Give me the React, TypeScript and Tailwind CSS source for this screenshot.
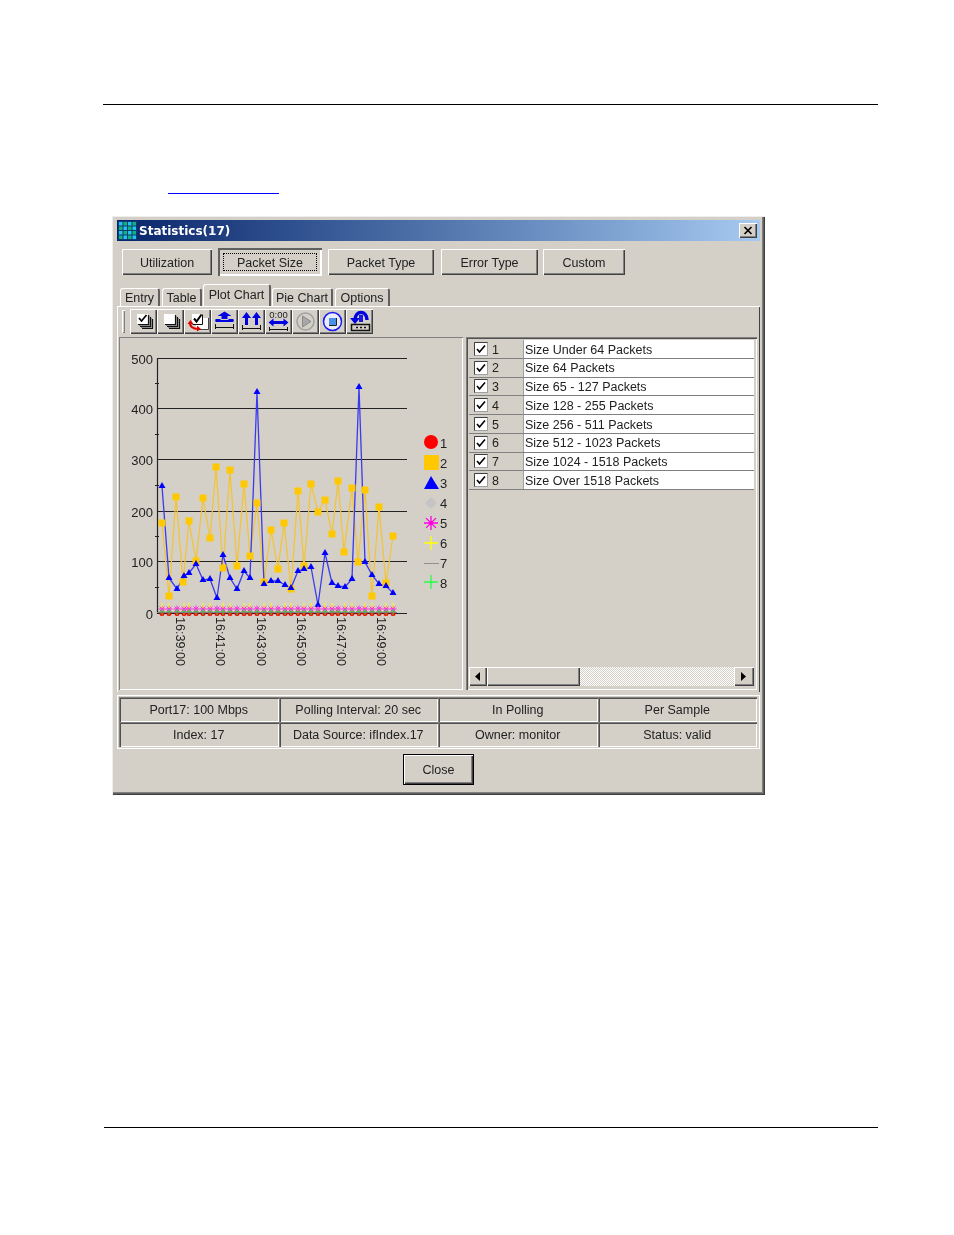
import React from "react";

const raised = "shadow-[inset_1px_1px_0_#ffffff,inset_-1px_-1px_0_#404040,inset_-2px_-2px_0_#808080]";
const sunken = "shadow-[inset_1px_1px_0_#808080,inset_2px_2px_0_#505050,inset_-1px_-1px_0_#ffffff]";
const etched = "shadow-[inset_1px_1px_0_#808080,inset_-1px_-1px_0_#ffffff]";

const blue: [number, number][] = [
  [162, 486], [169, 578], [177, 589], [184, 576], [189, 573], [196, 564], [203, 580], [210, 579], [217, 598],
  [223, 555], [230, 578], [237, 589], [244, 571], [250, 578], [257, 392], [264, 584], [271, 581], [278, 581],
  [285, 585], [291, 588], [298, 571], [304, 569], [311, 567], [318, 605], [325, 553], [332, 583], [338, 586],
  [345, 587], [352, 579], [359, 387], [365, 562], [372, 575], [379, 584], [386, 586], [393, 593],
];

const orange: [number, number][] = [
  [162, 523], [169, 596], [176, 497], [183, 582], [189, 521], [196, 561], [203, 498], [210, 538], [216, 467],
  [223, 568], [230, 470], [237, 566], [244, 484], [250, 556], [257, 503], [264, 582], [271, 530], [278, 569],
  [284, 523], [291, 589], [298, 491], [304, 566], [311, 484], [318, 512], [325, 500], [332, 534], [338, 481],
  [344, 552], [352, 488], [358, 562], [365, 490], [372, 596], [379, 507], [386, 583], [393, 536],
];

const ticks = [
  { y: 358, label: "500" },
  { y: 408, label: "400" },
  { y: 459, label: "300" },
  { y: 511, label: "200" },
  { y: 561, label: "100" },
  { y: 613, label: "0" },
];

const times = [
  { x: 176, label: "16:39:00" },
  { x: 216, label: "16:41:00" },
  { x: 257, label: "16:43:00" },
  { x: 297, label: "16:45:00" },
  { x: 337, label: "16:47:00" },
  { x: 377, label: "16:49:00" },
];

const series = [
  "Size Under 64 Packets",
  "Size 64 Packets",
  "Size 65 - 127 Packets",
  "Size 128 - 255 Packets",
  "Size 256 - 511 Packets",
  "Size 512 - 1023 Packets",
  "Size 1024 - 1518 Packets",
  "Size Over 1518 Packets",
];

const topButtons = [
  { label: "Utilization", cls: "w-[90px] h-[26px] ml-[5px]" },
  { label: "Packet Size", cls: "w-[104px] h-[28px] ml-[6px]", active: true },
  { label: "Packet Type", cls: "w-[106px] h-[26px] ml-[6px]" },
  { label: "Error Type", cls: "w-[97px] h-[26px] ml-[7px]" },
  { label: "Custom", cls: "w-[82px] h-[26px] ml-[5px]" },
];

const tabs = [
  { label: "Entry", cls: "w-[40px] h-[18px] ml-[3px]" },
  { label: "Table", cls: "w-[40px] h-[18px] ml-[2px]" },
  { label: "Plot Chart", cls: "w-[68px] h-[22px] ml-[1px]", active: true },
  { label: "Pie Chart", cls: "w-[61px] h-[18px] ml-[1px]" },
  { label: "Options", cls: "w-[55px] h-[18px] ml-[2px]" },
];

const statusCells = [
  "Port17: 100 Mbps",
  "Polling Interval: 20 sec",
  "In Polling",
  "Per Sample",
  "Index: 17",
  "Data Source: ifIndex.17",
  "Owner: monitor",
  "Status: valid",
];

function Star({ x, y, r, color, w = 1 }: { x: number; y: number; r: number; color: string; w?: number }) {
  const d = r * 0.7;
  return (
    <path
      d={`M${x - r} ${y}H${x + r}M${x} ${y - r}V${y + r}M${x - d} ${y - d}L${x + d} ${y + d}M${x - d} ${y + d}L${x + d} ${y - d}`}
      stroke={color}
      strokeWidth={w}
    />
  );
}

function Plus({ x, y, r, color, w = 1 }: { x: number; y: number; r: number; color: string; w?: number }) {
  return <path d={`M${x - r} ${y}H${x + r}M${x} ${y - r}V${y + r}`} stroke={color} strokeWidth={w} />;
}

function Chart() {
  const line = (pts: [number, number][]) => pts.map((p) => p.join(",")).join(" ");
  return (
    <svg width="344" height="353" viewBox="119 337 344 353" className="block">
      <g fontFamily="Liberation Sans, Arial, sans-serif" fontSize="13" fill="#222">
        {ticks.map((t) => (
          <g key={t.label}>
            <line x1="157" x2="407" y1={t.y + 0.5} y2={t.y + 0.5} stroke="#222" strokeWidth="1.2" />
            <text x="153" y={t.y + 6} textAnchor="end">{t.label}</text>
          </g>
        ))}
        {[383, 434, 485, 536, 587].map((y) => (
          <line key={y} x1="155" x2="159" y1={y + 0.5} y2={y + 0.5} stroke="#222" />
        ))}
        <line x1="157.5" x2="157.5" y1="358" y2="614" stroke="#222" strokeWidth="1.2" />
        {times.map((t) => (
          <text key={t.label} x={t.x} y="617" fontSize="12.6" transform={`rotate(90 ${t.x} 617)`}>{t.label}</text>
        ))}
      </g>

      <polyline points={line(orange)} fill="none" stroke="#f2c43c" strokeWidth="1.3" />
      <polyline points={line(blue)} fill="none" stroke="#3a3aee" strokeWidth="1.3" />
      {orange.map(([x, y], i) => (
        <rect key={i} x={x - 3.5} y={y - 3.5} width="7" height="7" fill="#ffc800" />
      ))}
      {blue.map(([x, y], i) => (
        <polygon key={i} points={`${x},${y - 4} ${x + 3.5},${y + 2} ${x - 3.5},${y + 2}`} fill="#0000ff" />
      ))}

      {blue.map(([x], i) => (
        <g key={i}>
          <circle cx={x} cy="613.500" r="2.500" fill="#ff0000" />
          <circle cx={x} cy="609" r="2" fill="#f080d8" />
          <Star x={x} y={609} r={3.5} color="#ff33e0" />
          <Plus x={x} y={612} r={3} color="#11ee33" />
          {i % 3 !== 2 && <path d={`M${x} 603V608`} stroke="#ffff00" />}
        </g>
      ))}
      <line x1="157" x2="397" y1="612.5" y2="612.5" stroke="#808080" />

      <circle cx="431" cy="442" r="7" fill="#ff0000" />
      <rect x="424" y="455" width="15" height="15" fill="#ffc800" />
      <polygon points="431,476 439,489 424,489" fill="#0000ff" />
      <polygon points="431,497 437,503 431,509 425,503" fill="#c4c4c4" />
      <Star x={431} y={523} r={7} color="#ff00e0" w={1.3} />
      <circle cx="431" cy="523" r="2" fill="#ff00e0" />
      <Plus x={431} y={543} r={7} color="#ffff00" w={1.3} />
      <line x1="424" x2="439" y1="563.5" y2="563.5" stroke="#909090" />
      <Plus x={431} y={582} r={7} color="#22ff44" w={1.3} />
      <g fontFamily="Liberation Sans, Arial, sans-serif" fontSize="13" fill="#222">
        {[448, 468, 488, 508, 528, 548, 568, 588].map((y, i) => (
          <text key={y} x="440" y={y}>{i + 1}</text>
        ))}
      </g>
    </svg>
  );
}

const icons: React.ReactNode[] = [
  <g key="a">
    <path d="M7 5h11v10H7z" fill="#fff" />
    <path d="M18.500 6v9.500H8M20.500 8v9.500H10M22.500 10v9.500H12" fill="none" stroke="#111" strokeWidth="1.200" />
    <path d="M19.500 7v9.500H9M21.500 9v9.500H11" fill="none" stroke="#888" />
    <path d="M9 9l2.500 3 5-6" fill="none" stroke="#000" strokeWidth="1.700" />
  </g>,
  <g key="b">
    <path d="M7 5h11v10H7z" fill="#fff" />
    <path d="M18.500 6v9.500H8M20.500 8v9.500H10M22.500 10v9.500H12" fill="none" stroke="#111" strokeWidth="1.200" />
    <path d="M19.500 7v9.500H9M21.500 9v9.500H11" fill="none" stroke="#888" />
  </g>,
  <g key="c">
    <path d="M12 9h12v11H12z" fill="#fff" />
    <path d="M24.500 9v11.500H14" fill="none" stroke="#444" />
    <path d="M8 5h10v10H8z" fill="#fff" />
    <path d="M18.500 5.500v10H8.500" fill="none" stroke="#111" />
    <path d="M10 9.500l2.500 3 5-7" fill="none" stroke="#000" strokeWidth="2" />
    <path d="M6.500 13c-1.500 4 2 7 8 7" fill="none" stroke="#e00000" strokeWidth="2" />
    <path d="M3.500 15l3-4 3 4zM13 16.500l4 3.500-4 2.500z" fill="#e00000" />
  </g>,
  <g key="d">
    <path d="M13.500 2.500l7 4.500h-4v3h-6v-3h-4z" fill="#0000e0" />
    <path d="M4.500 12h18" stroke="#0000e0" strokeWidth="2" />
    <path d="M4.500 10h5v2h-5zM17.500 10h5v2h-5z" fill="#0000e0" />
    <path d="M4.500 15v5M22.500 15v5M4.500 18.500h18" stroke="#111" />
  </g>,
  <g key="e">
    <path d="M8.500 3l4.500 6h-3v7h-3V9H4zM18.500 3l4.500 6h-3v7h-3V9h-3z" fill="#0000e0" />
    <path d="M4.500 16v5M22.500 16v5M4.500 19.500h18" stroke="#111" />
  </g>,
  <g key="f">
    <text x="13.500" y="8.500" fontFamily="Liberation Sans, Arial, sans-serif" fontSize="9.500" textAnchor="middle" fill="#222">0:00</text>
    <path d="M3.500 13.500l5-4v2.500h10V9.500l5 4-5 4V15h-10v2.500z" fill="#0000e0" />
    <path d="M4.500 18v4M22.500 18v4M4.500 20.500h18" stroke="#111" />
  </g>,
  <g key="g">
    <circle cx="13.500" cy="12.500" r="8.500" fill="none" stroke="#a0a0a0" strokeWidth="1.500" />
    <path d="M10.500 7l8.500 5.500-8.500 5.500z" fill="#a8a8a8" stroke="#8a8a8a" />
  </g>,
  <g key="h">
    <circle cx="13.500" cy="12.500" r="9" fill="#ececff" stroke="#1a1aee" strokeWidth="1.500" />
    <rect x="10" y="9" width="7" height="7" fill="#4a90e8" />
    <path d="M10 16.500h7.500V9" fill="none" stroke="#222" />
  </g>,
  <g key="i">
    <path d="M9 11c0-10 12-10 12 0" fill="none" stroke="#0000e0" strokeWidth="3.500" />
    <path d="M4 9h10l-5 6z" fill="#0000e0" />
    <rect x="13" y="6" width="4" height="7" fill="#1a1ae0" />
    <rect x="5.500" y="15.500" width="18" height="6" fill="#d4d0c8" stroke="#111" strokeWidth="1.500" />
    <path d="M10 18.500h2M14 18.500h2M18 18.500h2" stroke="#111" strokeWidth="1.500" />
  </g>,
];

function GridIcon() {
  return (
    <svg width="19" height="19" viewBox="0 0 19 19" className="ml-[1px] shrink-0">
      <rect width="19" height="19" fill="#0b3c7a" />
      {[0, 1, 2, 3].map((r) =>
        [0, 1, 2, 3].map((c) => (
          <rect key={`${r}-${c}`} x={1 + c * 4.5} y={1 + r * 4.5} width="3.500" height="3.500" fill={r % 2 === c % 2 ? "#22c4ee" : "#14b27a"} />
        ))
      )}
    </svg>
  );
}

export default function App() {
  return (
    <div className="w-[954px] h-[1235px] bg-white flex flex-col overflow-hidden font-['Liberation_Sans',Arial,sans-serif] text-[12.5px] text-[#222]">
      <div className="mt-[104px] ml-[103px] w-[775px] h-px bg-black shrink-0" />
      <div className="mt-[88px] ml-[168px] w-[111px] h-px bg-[#0000ff] shrink-0" />

      {/* window */}
      <div className="mt-[22px] ml-[112px] w-[653px] h-[579px] shrink-0 bg-[#d4d0c8] pt-[4px] px-[5px] blur-[0.4px] shadow-[inset_1px_1px_0_#eeeeee,inset_-1px_-1px_0_#404040,inset_-2px_-2px_0_#606060,inset_-3px_-3px_0_#808080]">
        <div className="h-[21px] flex items-center bg-gradient-to-r from-[#0a246a] to-[#a6caf0]">
          <GridIcon />
          <span className="ml-[2px] font-['DejaVu_Sans',sans-serif] font-bold text-[12px] text-white">Statistics(17)</span>
          <div className={`ml-auto mr-[3px] w-[18px] h-[15px] flex items-center justify-center bg-[#d4d0c8] ${raised}`}>
            <svg width="10" height="9" viewBox="0 0 10 9">
              <path d="M1.500 1l7 7M8.500 1l-7 7" stroke="#000" strokeWidth="1.700" />
            </svg>
          </div>
        </div>

        <div className="mt-[7px] h-[28px] flex items-center">
          {topButtons.map((b) =>
            b.active ? (
              <div key={b.label} className={`${b.cls} p-[5px] flex bg-[#d4d0c8] shadow-[inset_2px_2px_0_#606060,inset_-2px_-2px_0_#ffffff]`}>
                <div className="flex-1 flex items-center justify-center pt-[2px] border border-dotted border-black">{b.label}</div>
              </div>
            ) : (
              <div key={b.label} className={`${b.cls} flex items-center justify-center pt-[2px] ${raised}`}>{b.label}</div>
            )
          )}
        </div>

        <div className="mt-[8px] h-[22px] flex items-end">
          {tabs.map((t) => (
            <div
              key={t.label}
              className={`${t.cls} flex items-center justify-center rounded-t-[3px] border-t border-l border-white border-r-2 border-r-[#606060] ${t.active ? "" : "pt-[2px]"}`}
            >
              {t.label}
            </div>
          ))}
        </div>

        {/* tab panel */}
        <div className="h-[386px] pt-[3px] pl-[2px] pr-[3px] shadow-[inset_1px_1px_0_#ffffff,inset_-1px_0_0_#404040]">
          <div className="h-[25px] flex items-center">
            <div className="ml-[3px] w-[3px] h-[23px] shadow-[inset_1px_1px_0_#ffffff,inset_-1px_-1px_0_#808080]" />
            <div className="ml-[5px] flex">
              {icons.map((icon, i) => (
                <div key={i} className={`w-[27px] h-[25px] ${raised}`}>
                  <svg width="27" height="25" viewBox="0 0 27 25" className="block">{icon}</svg>
                </div>
              ))}
            </div>
          </div>

          <div className="mt-[3px] h-[353px] flex">
            <div className={`w-[344px] shrink-0 ${etched}`}>
              <Chart />
            </div>
            <div className={`ml-[3px] w-[291px] shrink-0 pt-[3px] px-[3px] flex flex-col ${sunken}`}>
              <div className="h-[150px] grid grid-rows-8 bg-white">
                {series.map((s, i) => (
                  <div key={s} className="flex border-b border-[#808080] bg-white">
                    <div className="w-[55px] shrink-0 flex items-center bg-[#d4d0c8] border-r border-[#a0a0a0]">
                      <svg width="14" height="14" viewBox="0 0 14 14" className="ml-[5px]">
                        <rect x="0.500" y="0.500" width="13" height="13" fill="#fff" stroke="#a0a0a0" />
                        <path d="M0.500 13.500V0.500H13.500" fill="none" stroke="#404040" />
                        <path d="M3 7l2.500 3L11 3.500" fill="none" stroke="#000" strokeWidth="1.600" />
                      </svg>
                      <span className="ml-[4px] pt-[2px]">{i + 1}</span>
                    </div>
                    <div className="pl-[1px] pt-[2px] flex items-center whitespace-nowrap">{s}</div>
                  </div>
                ))}
              </div>
              <div className="mt-auto mb-[4px] h-[19px] flex bg-[repeating-conic-gradient(#ffffff_0_25%,#d4d0c8_0_50%)] bg-[length:2px_2px]">
                <div className={`w-[18px] flex items-center justify-center bg-[#d4d0c8] ${raised}`}>
                  <svg width="6" height="9" viewBox="0 0 6 9"><path d="M5 0v9L0 4.500z" fill="#000" /></svg>
                </div>
                <div className={`w-[93px] bg-[#d4d0c8] ${raised}`} />
                <div className={`ml-auto w-[20px] flex items-center justify-center bg-[#d4d0c8] ${raised}`}>
                  <svg width="6" height="9" viewBox="0 0 6 9"><path d="M0 0v9l5-4.500z" fill="#000" /></svg>
                </div>
              </div>
            </div>
          </div>
        </div>

        {/* status table */}
        <div className="mt-[3px] h-[54px] pt-[2px] pb-[2px] pl-[2px] pr-[3px] grid grid-cols-4 grid-rows-2 shadow-[inset_1px_1px_0_#ffffff,inset_-1px_-1px_0_#ffffff]">
          {statusCells.map((c) => (
            <div key={c} className={`flex items-center justify-center pt-[2px] whitespace-nowrap ${sunken}`}>{c}</div>
          ))}
        </div>

        <div className="mt-[5px] flex justify-center">
          <div className="w-[71px] h-[31px] flex items-center justify-center pt-[2px] border border-black shadow-[inset_1px_1px_0_#ffffff,inset_-1px_-1px_0_#404040,inset_-2px_-2px_0_#808080]">Close</div>
        </div>
      </div>

      <div className="mt-[332px] ml-[104px] w-[774px] h-px bg-black shrink-0" />
    </div>
  );
}
